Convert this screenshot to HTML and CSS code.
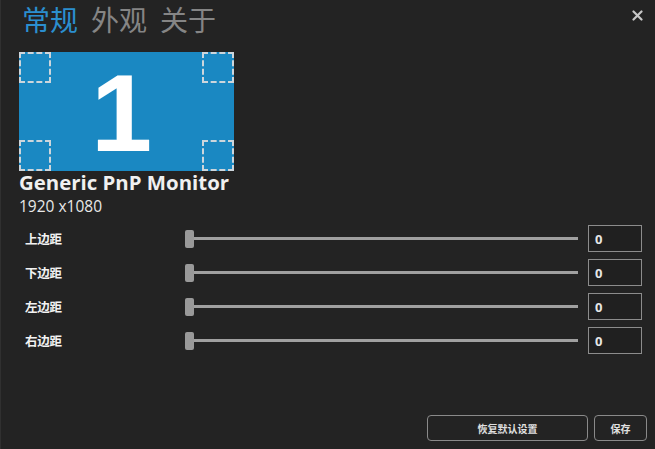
FILE: index.html
```html
<!DOCTYPE html>
<html lang="zh-CN">
<head>
<meta charset="utf-8">
<title>设置</title>
<link rel="stylesheet" href="styles.css">
</head>
<body>
<div class="window">
  <div class="header">
    <nav class="tabs">
      <span class="tab active">常规</span>
      <span class="tab">外观</span>
      <span class="tab">关于</span>
    </nav>
    <span class="close">
      <svg width="11" height="11" viewBox="0 0 11 11"><path d="M1.5 1.5 L9.5 9.5 M9.5 1.5 L1.5 9.5" stroke="#c8c8c8" stroke-width="2.2" stroke-linecap="round"/></svg>
    </span>
  </div>

  <div class="monitor">
    <span class="corner tl"></span>
    <span class="corner tr"></span>
    <span class="num">1</span>
    <span class="corner bl"></span>
    <span class="corner br"></span>
  </div>
  <div class="mon-name">Generic PnP Monitor</div>
  <div class="mon-res">1920 x1080</div>

  <div class="margins">
    <div class="label">上边距</div>
    <div class="slider"><span class="thumb"></span><span class="track"></span></div>
    <div class="field">0</div>

    <div class="label">下边距</div>
    <div class="slider"><span class="thumb"></span><span class="track"></span></div>
    <div class="field">0</div>

    <div class="label">左边距</div>
    <div class="slider"><span class="thumb"></span><span class="track"></span></div>
    <div class="field">0</div>

    <div class="label">右边距</div>
    <div class="slider"><span class="thumb"></span><span class="track"></span></div>
    <div class="field">0</div>
  </div>

  <div class="footer">
    <button class="btn wide">恢复默认设置</button>
    <button class="btn">保存</button>
  </div>
</div>
</body>
</html>
```

FILE: styles.css
```css
html, body {
  margin: 0;
  padding: 0;
  background: #232323;
}
body {
  font-family: "Open Sans", "Noto Sans CJK SC", sans-serif;
  color: #f0f0f0;
}
.window {
  width: 655px;
  height: 449px;
  box-sizing: border-box;
  border-left: 1px solid #303030;
  display: flex;
  flex-direction: column;
  padding: 0 8px 8px 18px;
}
.header {
  display: flex;
  justify-content: space-between;
  align-items: flex-start;
  height: 52px;
}
.tabs {
  display: flex;
  gap: 13px;
  margin-left: 3px;
}
.tab {
  font-family: "Noto Sans CJK SC", sans-serif;
  font-size: 28px;
  line-height: 41px;
  margin-top: -1px;
  color: #858585;
}
.tab.active {
  color: #2b8fcf;
}
.close {
  display: flex;
  margin-top: 10px;
  margin-right: 4px;
}
.monitor {
  width: 215px;
  height: 119px;
  background: #1a88c2;
  display: grid;
  grid-template-columns: 32px 1fr 32px;
  grid-template-rows: 31px 1fr 31px;
}
.corner {
  border: 2px dashed #cdd6dc;
  box-sizing: border-box;
}
.tl { grid-column: 1; grid-row: 1; }
.tr { grid-column: 3; grid-row: 1; }
.bl { grid-column: 1; grid-row: 3; }
.br { grid-column: 3; grid-row: 3; }
.monitor .num {
  grid-area: 1 / 1 / 4 / 4;
  display: flex;
  align-items: center;
  justify-content: center;
  font-family: "Liberation Sans", sans-serif;
  font-weight: 700;
  font-size: 110px;
  line-height: 100px;
  color: #ffffff;
  padding-right: 10px;
  padding-top: 2px;
}
.mon-name {
  font-weight: 700;
  font-size: 20.4px;
  line-height: 28px;
  margin-top: -3px;
}
.mon-res {
  font-size: 15.5px;
  line-height: 21px;
  color: #e8e8e8;
}
.margins {
  display: grid;
  grid-template-columns: 150px 1fr 54px;
  grid-auto-rows: 27px;
  row-gap: 7px;
  column-gap: 10px;
  align-items: center;
  margin-top: 8px;
  padding-left: 6px;
  padding-right: 5px;
}
.label {
  font-family: "Noto Sans CJK SC", sans-serif;
  font-weight: 700;
  font-size: 12.5px;
  color: #f2f2f2;
  letter-spacing: -0.3px;
}
.slider {
  display: flex;
  align-items: center;
}
.thumb {
  width: 9px;
  height: 18px;
  border-radius: 2px;
  background: #999999;
  flex: none;
}
.track {
  flex: 1;
  height: 3px;
  background: #a0a0a0;
}
.field {
  height: 27px;
  box-sizing: border-box;
  border: 1.5px solid #8c8c8c;
  background: #202020;
  display: flex;
  align-items: center;
  padding-left: 6px;
  font-weight: 700;
  font-size: 13px;
  color: #e6e6e6;
}
.footer {
  margin-top: auto;
  display: flex;
  justify-content: flex-end;
  gap: 6px;
}
.btn {
  height: 26px;
  width: 53px;
  box-sizing: border-box;
  border: 1.5px solid #8a8a8a;
  border-radius: 4px;
  background: #232323;
  color: #e0e0e0;
  font-family: "Noto Sans CJK SC", sans-serif;
  font-weight: 700;
  font-size: 10px;
  padding: 0;
}
.btn.wide {
  width: 161px;
}
```
